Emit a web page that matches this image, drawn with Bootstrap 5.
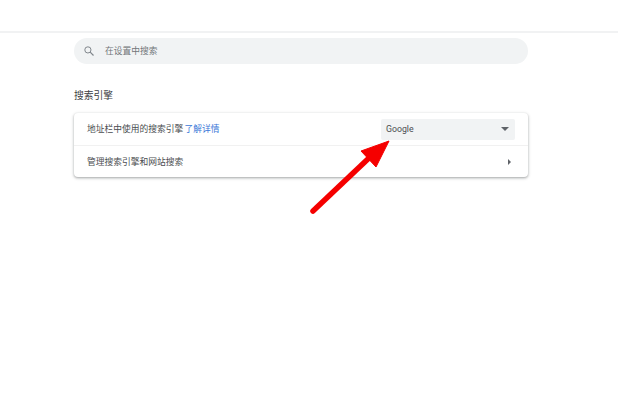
<!DOCTYPE html>
<html lang="zh-CN">
<head>
<meta charset="utf-8">
<link href="https://cdn.jsdelivr.net/npm/bootstrap@5.3.0/dist/css/bootstrap.min.css" rel="stylesheet">
<style>
html,body{height:100%;margin:0;background:#fff;overflow:hidden}
body{font-family:Roboto,"Noto Sans CJK SC",sans-serif;color:#4a4d50;font-size:8.75px;position:relative}
.top-rule{height:33px;border-bottom:2px solid #f1f2f3}
.shell{width:454px;margin-left:74px}
.search-pill{height:26px;margin-top:5px;background:#f1f3f4;border-radius:13px;padding-left:10px;gap:11px;color:#72767a}
.cap-text{padding-top:2px}
.sect-title{font-size:9.75px;line-height:14px;margin-top:25px;margin-bottom:10px;color:#3c4043}
.set-card{height:64px;background:#fff;border-radius:4px;box-shadow:0 1px 2px rgba(60,64,67,.3),0 1px 3px 1px rgba(60,64,67,.15)}
.set-row{height:32px;padding:0 13px}
.set-row+.set-row{border-top:1px solid #f1f1f1}
.learn{color:#3b78d8;text-decoration:none;margin-left:-1px}
.pick{width:134px;height:21px;background:#f1f3f4;border-radius:2px;padding:0 6px 0 5px;color:#4a4d50}
.overlay-arrow{position:absolute;left:0;top:0;width:618px;height:400px;pointer-events:none}
</style>
</head>
<body>
<div class="top-rule"></div>
<div class="shell">
  <div class="search-pill d-flex align-items-center">
    <svg width="10" height="10" viewBox="0 0 10 10" fill="none" stroke="#80868b" stroke-width="1"><circle cx="3.9" cy="3.9" r="3.1"/><path d="M6.2 6.2 9.5 9.5" stroke-width="1.2"/></svg>
    <span class="cap-text">在设置中搜索</span>
  </div>
  <div class="sect-title">搜索引擎</div>
  <div class="set-card">
    <div class="set-row d-flex align-items-center justify-content-between">
      <div class="cap-text">地址栏中使用的搜索引擎 <a class="learn" href="#">了解详情</a></div>
      <div class="pick d-flex align-items-center justify-content-between">
        <span class="cap-text">Google</span>
        <svg width="8" height="4" viewBox="0 0 8 4"><path d="M0 0H8L4 4Z" fill="#5f6368"/></svg>
      </div>
    </div>
    <div class="set-row d-flex align-items-center justify-content-between">
      <div class="cap-text">管理搜索引擎和网站搜索</div>
      <svg class="me-1" width="3" height="6" viewBox="0 0 3 6"><path d="M0 0 3 3 0 6Z" fill="#5f6368"/></svg>
    </div>
  </div>
</div>
<svg class="overlay-arrow" viewBox="0 0 618 400">
  <path d="M313 211 L369 158" stroke="#f50000" stroke-width="5.5" stroke-linecap="round" fill="none"/>
  <path d="M389 141 L361 151 L376 167Z" fill="#f50000" stroke="#f50000" stroke-width="1" stroke-linejoin="round"/>
</svg>
</body>
</html>
